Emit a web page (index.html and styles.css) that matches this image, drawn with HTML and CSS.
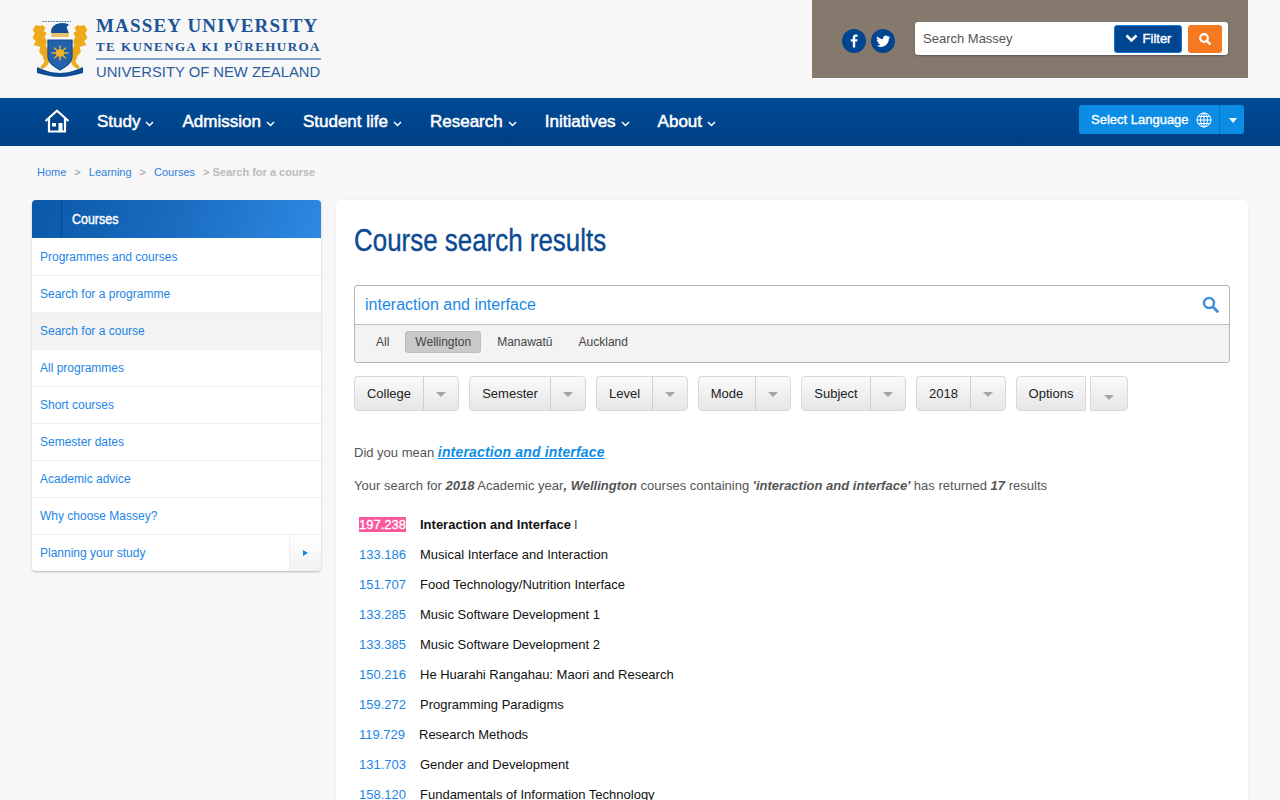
FILE: index.html
```html
<!DOCTYPE html>
<html lang="en">
<head>
<meta charset="utf-8">
<title>Course search results</title>
<link rel="stylesheet" href="styles.css">
</head>
<body>
<header class="top">
  <div class="logo">
    <svg class="crest" width="56" height="58" viewBox="2.500 0 51 58" preserveAspectRatio="none">
      <path d="M12 1.500h26" stroke="#3b6fb0" stroke-width="1.200" stroke-dasharray="1.500 1" fill="none"/>
      <path d="M6 5l4 1 2-1 3 3-2 3 3 2-2 4 2 4-1 5 3 4-1 6 2 5-3 5-4 3-2-2 4-5-2-6-3-4 1-5-6-2 2-4-3-3 2-5-2-3z" fill="#eeaa1a"/>
      <path d="M50 5l-4 1-2-1-3 3 2 3-3 2 2 4-2 4 1 5-3 4 1 6-2 5 3 5 4 3 2-2-4-5 2-6 3-4-1-5 6-2-2-4 3-3-2-5 2-3z" fill="#eeaa1a"/>
      <path d="M20 13c-1-6 4-10 10-10 4 0 6 1 6 2l-2 2 2 6z" fill="#134f98"/>
      <rect x="20" y="13" width="16" height="4" fill="#e9c067"/>
      <path d="M17 20h22v17c0 6-6 10-11 13-5-3-11-7-11-13z" fill="#2462ad" stroke="#0f4c96"/>
      <circle cx="28" cy="33" r="3.800" fill="#eeb32b"/>
      <path d="M28 25.500v15M20.500 33h15M22.700 27.700l10.600 10.600M33.300 27.700L22.700 38.300" stroke="#eeb32b" stroke-width="1.300"/>
      <path d="M7 47c6 3 14 6 21 6s15-3 21-6v6c-7 2-14 4-21 4S14 55 7 53z" fill="#0f4c96"/>
    </svg>
    <div class="wordmark">
      <div class="wm-a">MASSEY UNIVERSITY</div>
      <div class="wm-b">TE KUNENGA KI PŪREHUROA</div>
      <div class="wm-c">UNIVERSITY OF NEW ZEALAND</div>
    </div>
  </div>
  <div class="tools">
    <div class="social">
      <span class="disc"><svg width="24" height="24" viewBox="0 0 24 24"><path d="M13.200 18.500v-5.900h2l.3-2.300h-2.300V8.900c0-.7.2-1.100 1.100-1.100h1.300V5.700c-.3 0-1-.1-1.800-.1-1.800 0-3 1.100-3 3.100v1.600h-2v2.300h2v5.900z" fill="#fff"/></svg></span>
      <span class="disc"><svg width="24" height="24" viewBox="0 0 24 24"><path d="M19 8c-.5.2-1 .4-1.600.4.600-.3 1-.9 1.200-1.500-.5.3-1.100.6-1.800.7a2.800 2.800 0 0 0-4.800 2.600C9.700 10.100 7.600 9 6.200 7.300c-.8 1.300-.4 3 .9 3.800-.5 0-.9-.1-1.300-.4 0 1.400 1 2.600 2.300 2.800-.4.100-.8.100-1.300 0 .4 1.100 1.400 1.900 2.600 1.900-1.200 1-2.700 1.400-4.200 1.200 5.700 3.400 12.900-.2 12.700-7.300.7-.3 1.200-.8 1.600-1.300z" fill="#fff"/></svg></span>
    </div>
    <div class="sitesearch">
      <span class="ss-text">Search Massey</span>
      <span class="filter"><svg width="13" height="9" viewBox="0 0 13 9"><path d="M1.500 1.500l5 5 5-5" stroke="#fff" stroke-width="2.600" fill="none"/></svg>Filter</span>
      <span class="go"><svg width="14" height="14" viewBox="0 0 14 14"><circle cx="6" cy="6" r="3.800" stroke="#fff" stroke-width="2.200" fill="none"/><path d="M9 9l3.500 3.500" stroke="#fff" stroke-width="2.400"/></svg></span>
    </div>
  </div>
</header>

<nav class="mainnav">
  <svg class="home" width="26" height="24" viewBox="0 0 26 24"><path d="M1.500 12L13 1.800 24.500 12M5 9.500V22.500H21V9.500" fill="none" stroke="#fff" stroke-width="2.200"/><rect x="14.500" y="14" width="4" height="8" fill="#fff"/><rect x="8" y="14" width="4" height="3.500" fill="#fff"/></svg>
  <ul class="navlist">
    <li>Study<svg class="chev" width="9" height="6" viewBox="0 0 9 6"><path d="M1 1l3.500 3.500L8 1" stroke="#fff" stroke-width="1.500" fill="none"/></svg></li>
    <li>Admission<svg class="chev" width="9" height="6" viewBox="0 0 9 6"><path d="M1 1l3.500 3.500L8 1" stroke="#fff" stroke-width="1.500" fill="none"/></svg></li>
    <li>Student life<svg class="chev" width="9" height="6" viewBox="0 0 9 6"><path d="M1 1l3.500 3.500L8 1" stroke="#fff" stroke-width="1.500" fill="none"/></svg></li>
    <li>Research<svg class="chev" width="9" height="6" viewBox="0 0 9 6"><path d="M1 1l3.500 3.500L8 1" stroke="#fff" stroke-width="1.500" fill="none"/></svg></li>
    <li>Initiatives<svg class="chev" width="9" height="6" viewBox="0 0 9 6"><path d="M1 1l3.500 3.500L8 1" stroke="#fff" stroke-width="1.500" fill="none"/></svg></li>
    <li>About<svg class="chev" width="9" height="6" viewBox="0 0 9 6"><path d="M1 1l3.500 3.500L8 1" stroke="#fff" stroke-width="1.500" fill="none"/></svg></li>
  </ul>
  <div class="lang">
    <span class="lang-main">Select Language
      <svg width="16" height="16" viewBox="0 0 16 16"><g fill="none" stroke="#fff" stroke-width="1"><circle cx="8" cy="8" r="7"/><ellipse cx="8" cy="8" rx="3.500" ry="7"/><path d="M8 1v14M1 8h14M2 4.500h12M2 11.500h12"/></g></svg>
    </span>
    <span class="lang-arrow"></span>
  </div>
</nav>

<div class="crumbs">
  <a>Home</a><span class="sep">&gt;</span><a>Learning</a><span class="sep">&gt;</span><a>Courses</a><span class="sep last">&gt;</span><b>Search for a course</b>
</div>

<div class="columns">
  <aside class="side">
    <div class="side-head"><span class="side-tab"></span><span class="side-title">Courses</span></div>
    <ul class="side-list">
      <li>Programmes and courses</li>
      <li>Search for a programme</li>
      <li class="current">Search for a course</li>
      <li>All programmes</li>
      <li>Short courses</li>
      <li>Semester dates</li>
      <li>Academic advice</li>
      <li>Why choose Massey?</li>
      <li class="has-more"><span class="more-label">Planning your study</span><span class="more"><i></i></span></li>
    </ul>
  </aside>

  <main class="card">
    <h1><span class="h1-text">Course search results</span></h1>
    <div class="searchbox">
      <div class="query">
        <span>interaction and interface</span>
        <svg width="18" height="18" viewBox="0 0 18 18"><circle cx="7" cy="7" r="5" stroke="#3f8fe0" stroke-width="2.400" fill="none"/><path d="M10.800 10.800l5.400 5.400" stroke="#3f8fe0" stroke-width="2.800"/></svg>
      </div>
      <div class="campus">
        <span class="pill">All</span><span class="pill on">Wellington</span><span class="pill">Manawatū</span><span class="pill">Auckland</span>
      </div>
    </div>

    <div class="filters">
      <div class="dd w105"><span class="dd-l">College</span><span class="dd-a"></span></div>
      <div class="dd w117"><span class="dd-l">Semester</span><span class="dd-a"></span></div>
      <div class="dd w92"><span class="dd-l">Level</span><span class="dd-a"></span></div>
      <div class="dd w93"><span class="dd-l">Mode</span><span class="dd-a"></span></div>
      <div class="dd w105"><span class="dd-l">Subject</span><span class="dd-a"></span></div>
      <div class="dd w90"><span class="dd-l">2018</span><span class="dd-a"></span></div>
      <div class="split"><span class="dd solo w70"><span class="dd-l">Options</span></span><span class="dd solo w38"><span class="dd-a low"></span></span></div>
    </div>

    <p class="didyou">Did you mean <a>interaction and interface</a></p>
    <p class="summary">Your search for <b>2018</b> Academic year<b>, Wellington</b> courses containing <b>'interaction and interface'</b> has returned <b>17</b> results</p>

    <ul class="results">
      <li class="hit"><span class="code"><mark>197.238</mark></span><strong>Interaction and Interface</strong><span class="thin">I</span></li>
      <li><span class="code">133.186</span>Musical Interface and Interaction</li>
      <li><span class="code">151.707</span>Food Technology/Nutrition Interface</li>
      <li><span class="code">133.285</span>Music Software Development 1</li>
      <li><span class="code">133.385</span>Music Software Development 2</li>
      <li><span class="code">150.216</span>He Huarahi Rangahau: Maori and Research</li>
      <li><span class="code">159.272</span>Programming Paradigms</li>
      <li><span class="code tight">119.729</span>Research Methods</li>
      <li><span class="code">131.703</span>Gender and Development</li>
      <li><span class="code">158.120</span>Fundamentals of Information Technology</li>
    </ul>
  </main>
</div>
</body>
</html>
```
FILE: styles.css
```css
* { box-sizing: border-box; }
html, body { margin: 0; height: 800px; overflow: hidden; }
body { background: #f7f7f7; font-family: "Liberation Sans", Arial, sans-serif; color: #222; }
ul { list-style: none; margin: 0; padding: 0; }

.top { height: 98px; display: flex; justify-content: space-between; align-items: flex-start; padding: 0 32px; }
.logo { display: flex; align-items: flex-start; padding-top: 20px; }
.crest { display: block; }
.wordmark { margin: -3px 0 0 8px; width: 225px; color: #1d5498; }
.wm-a { font: bold 19px/18px "Liberation Serif", serif; letter-spacing: 1.170px; white-space: nowrap; }
.wm-b { font: bold 13px/14px "Liberation Serif", serif; letter-spacing: 1.440px; margin-top: 5px; padding-bottom: 4px; border-bottom: 2px solid #7fa0cc; white-space: nowrap; }
.wm-c { font-size: 14.800px; line-height: 20px; margin-top: 2px; white-space: nowrap; color: #2c5e9f; }

.tools { width: 436px; height: 78px; background: #85796e; display: flex; align-items: flex-start; padding: 22px 20px 0 30px; }
.social { display: flex; gap: 5px; padding-top: 7px; }
.disc { width: 24px; height: 24px; border-radius: 50%; background: #004590; display: block; }
.disc svg { display: block; }
.sitesearch { width: 313px; height: 33px; margin-left: 20px; background: #fff; border-radius: 3px; box-shadow: 0 1px 2px rgba(0,0,0,.3); display: flex; align-items: center; padding: 0 6px 0 8px; }
.ss-text { font-size: 13px; color: #555; flex: 1; margin-bottom: 1px; }
.filter { width: 68px; height: 28px; background: #004590; border: 1px solid #0a7ad6; border-radius: 3px; color: #fff; font-size: 13px; -webkit-text-stroke: .4px #fff; display: flex; align-items: center; justify-content: center; gap: 5px; }
.go { width: 34px; height: 28px; margin-left: 6px; background: #f47920; border-radius: 3px; display: flex; align-items: center; justify-content: center; }

.mainnav { height: 48px; background: linear-gradient(#004b96, #003f84); display: flex; align-items: center; padding: 0 36px 0 44px; color: #fff; }
.home { display: block; margin-bottom: 3px; }
.navlist { display: flex; gap: 28px; margin-left: 27px; flex: 1; }
.navlist li { font-size: 17px; -webkit-text-stroke: .5px #fff; display: flex; align-items: center; white-space: nowrap; }
.chev { margin: 4px 0 0 5px; }
.lang { width: 165px; height: 29px; background: #0b8de6; border-radius: 3px; display: flex; font-size: 13px; -webkit-text-stroke: .35px #fff; margin-bottom: 5px; }
.lang-main { flex: 1; display: flex; align-items: center; justify-content: space-between; padding: 0 7px 0 12px; border-right: 1px solid #0a72c4; }
.lang-arrow { width: 24px; position: relative; }
.lang-arrow::after { content: ""; position: absolute; left: 9px; top: 13px; border: 4px solid transparent; border-top: 5px solid #fff; border-bottom: 0; }

.crumbs { height: 54px; padding: 19px 0 0 37px; font-size: 11px; line-height: 14px; color: #999; }
.crumbs a { color: #2f80dd; }
.sep { margin: 0 8px; }
.sep.last { margin-right: 3px; }
.crumbs b { color: #bbb; }

.columns { display: flex; align-items: flex-start; padding: 0 32px; gap: 15px; }
.side { width: 289px; flex: none; background: #fff; border-radius: 4px; box-shadow: 0 1px 2px rgba(0,0,0,.25); }
.side-head { height: 38px; border-radius: 4px 4px 0 0; background: linear-gradient(110deg, #0a58a8 0%, #1a6cc0 50%, #2e8ae3 100%); display: flex; color: #fff; }
.side-tab { width: 30px; border-right: 1px solid #0a4a90; }
.side-title { font-size: 15px; -webkit-text-stroke: .45px #fff; line-height: 38px; margin-left: 10px; transform: scaleX(.83); transform-origin: left center; }
.side-list li { height: 37px; border-top: 1px solid #eee; font-size: 12px; line-height: 36px; padding-left: 8px; color: #1c85e6; }
.side-list li:first-child { border-top: 0; padding-top: 1px; }
.side-list li.current { background: #f3f3f3; }
.side-list li.has-more { display: flex; justify-content: space-between; padding-right: 0; }
.more { width: 32px; border-left: 1px solid #eee; background: linear-gradient(#fff, #f2f2f2); position: relative; border-radius: 0 0 4px 0; }
.more i { position: absolute; left: 13px; top: 15px; border: 3.500px solid transparent; border-left: 5px solid #0b8de6; border-right: 0; }

.card { flex: 1; background: #fff; border-radius: 4px; height: 640px; padding: 0 18px; box-shadow: 0 0 2px rgba(0,0,0,.08); }
h1 { margin: 0; padding-top: 22px; height: 85px; font-size: 30.500px; line-height: 36px; font-weight: normal; color: #0b4a92; -webkit-text-stroke: .35px #0b4a92; }
.h1-text { display: inline-block; transform: scaleX(.85); transform-origin: left center; white-space: nowrap; }

.searchbox { height: 78px; border: 1px solid #b5b5b5; border-radius: 3px; overflow: hidden; }
.query { height: 39px; border-bottom: 1px solid #c0c0c0; display: flex; justify-content: space-between; align-items: center; padding: 0 9px 0 10px; font-size: 16px; color: #1c88e6; }
.campus { height: 38px; background: #f3f3f3; display: flex; align-items: center; padding: 0 0 4px 11px; gap: 6px; font-size: 12px; color: #444; }
.pill { height: 22px; line-height: 22px; padding: 0 10px; border-radius: 3px; }
.pill.on { background: #c9c9c9; border: 1px solid #bcbcbc; line-height: 20px; padding: 0 9px; }

.filters { display: flex; gap: 10px; margin-top: 13px; }
.dd { height: 35px; border: 1px solid #d8d8d8; border-radius: 4px; background: linear-gradient(#fafafa, #e6e6e6); display: flex; font-size: 13px; color: #222; }
.dd-l { flex: 1; text-align: center; line-height: 33px; }
.dd-a { width: 35px; border-left: 1px solid #cfcfcf; position: relative; flex: none; }
.dd-a::after { content: ""; position: absolute; left: 12px; top: 15px; border: 5px solid transparent; border-top: 5px solid #a5a5a5; border-bottom: 0; }
.w105 { width: 105px; } .w117 { width: 117px; } .w92 { width: 92px; } .w93 { width: 93px; } .w90 { width: 90px; }
.split { display: flex; gap: 4px; }
.solo { border-radius: 4px 0 0 4px; }
.w70 { width: 70px; }
.w38 { width: 38px; border-radius: 0 4px 4px 0; }
.dd-a.low { border-left: 0; width: 36px; }
.dd-a.low::after { left: 13px; top: 18px; }

.didyou { margin: 32px 0 0; font-size: 13px; line-height: 18px; color: #555; }
.didyou a { color: #0b8de6; font-weight: bold; font-style: italic; font-size: 14px; letter-spacing: .17px; text-decoration: underline; }
.summary { margin: 15px 0 0; font-size: 13px; line-height: 18px; color: #555; letter-spacing: .01px; }
.summary b { font-style: italic; }

.results { margin-top: 15px; padding-left: 5px; }
.results li { height: 30px; font-size: 13px; line-height: 30px; color: #111; white-space: nowrap; }
.code { display: inline-block; width: 61px; color: #1c85e6; }
.code.tight { width: 60px; }
mark { background: #f9589f; color: #fff; padding: 0; -webkit-text-stroke: .3px #fff; }
.thin { margin-left: 3px; font-weight: normal; color: #444; }
```
